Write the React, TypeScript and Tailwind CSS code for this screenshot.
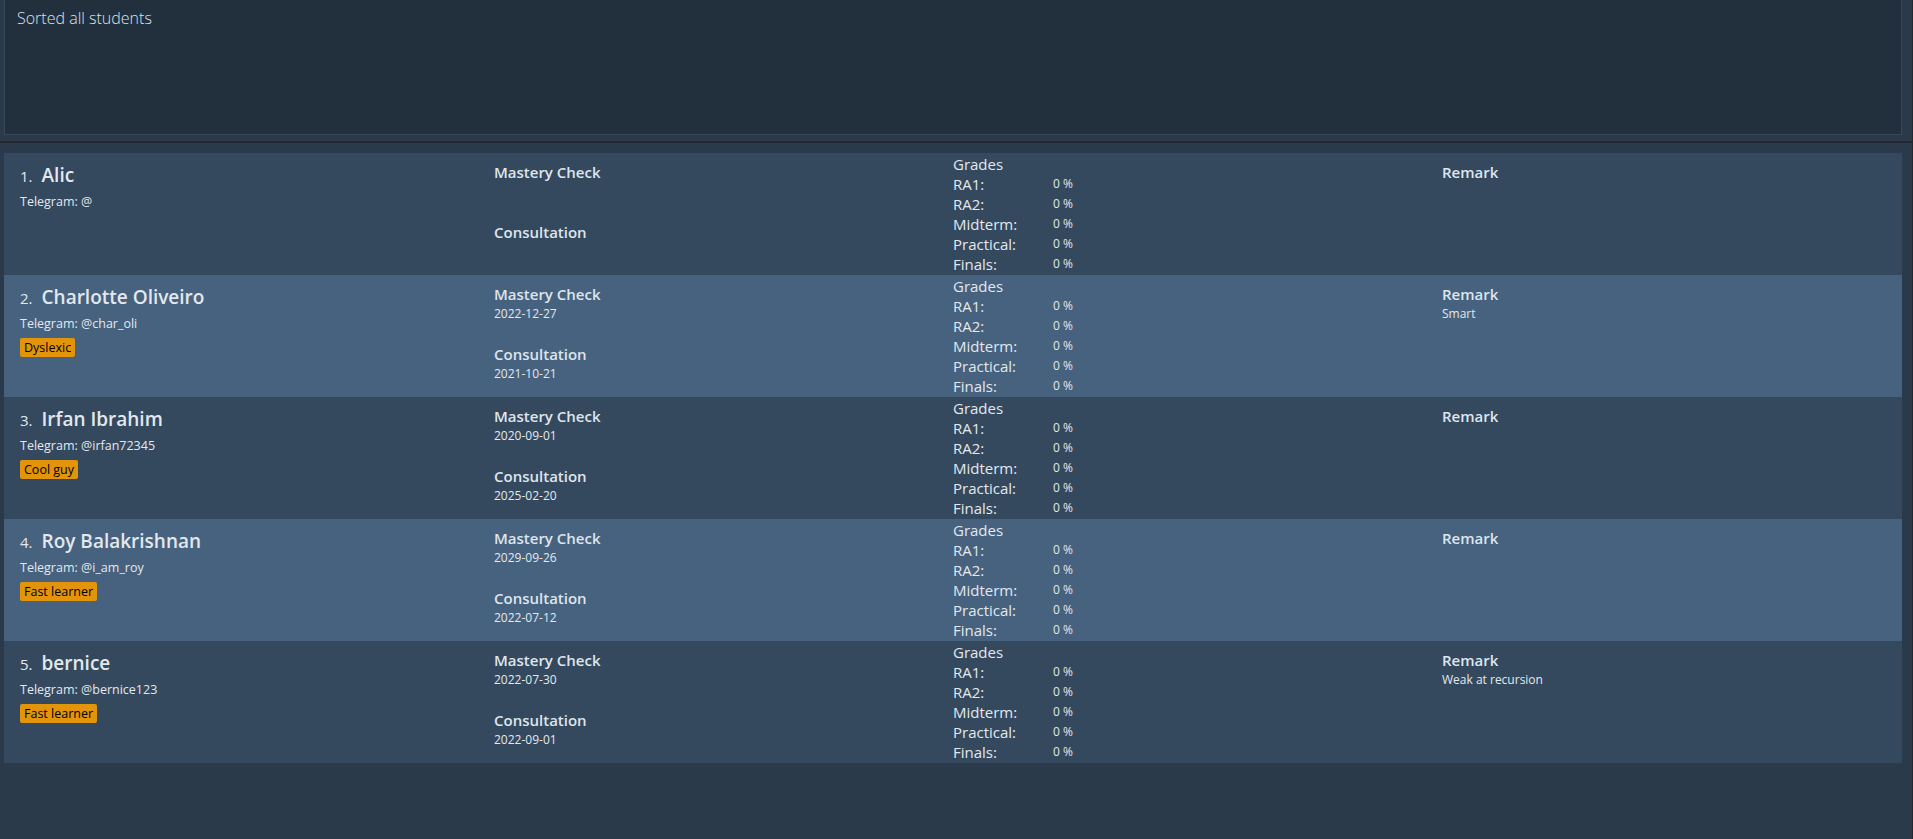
// Student list view — result box on top, one row per student below.
const font = { fontFamily: '"Open Sans", "Noto Sans", sans-serif' };

interface Student {
  name: string;
  telegram: string;
  tag?: string;
  mastery?: string;
  consultation?: string;
  remark?: string;
}

const students: Student[] = [
  { name: 'Alic', telegram: '@' },
  {
    name: 'Charlotte Oliveiro',
    telegram: '@char_oli',
    tag: 'Dyslexic',
    mastery: '2022-12-27',
    consultation: '2021-10-21',
    remark: 'Smart',
  },
  {
    name: 'Irfan Ibrahim',
    telegram: '@irfan72345',
    tag: 'Cool guy',
    mastery: '2020-09-01',
    consultation: '2025-02-20',
  },
  {
    name: 'Roy Balakrishnan',
    telegram: '@i_am_roy',
    tag: 'Fast learner',
    mastery: '2029-09-26',
    consultation: '2022-07-12',
  },
  {
    name: 'bernice',
    telegram: '@bernice123',
    tag: 'Fast learner',
    mastery: '2022-07-30',
    consultation: '2022-09-01',
    remark: 'Weak at recursion',
  },
];

const gradeRows = ['RA1:', 'RA2:', 'Midterm:', 'Practical:', 'Finals:'];

function StudentRow({ s, index }: { s: Student; index: number }) {
  const bg = index % 2 === 0 ? 'bg-[#34495e]' : 'bg-[#46627f]';
  return (
    <div className={`${bg} h-[122px] grid grid-cols-[490px_459px_489px_1fr] text-[#e3e8ee]`}>
      {/* Name, handle, tag */}
      <div className="pl-4 pt-[8px]">
        <div className="flex items-baseline gap-[9px] h-[26px]">
          <span className="text-[15px]">{index + 1}.</span>
          <span className="text-[19px] font-semibold">{s.name}</span>
        </div>
        <div className="mt-[7px] text-[12.5px] leading-[16px]">Telegram: {s.telegram}</div>
        {s.tag && (
          <span className="mt-[6px] inline-block h-[19px] rounded-[2px] bg-[#e2950b] px-[4px] text-[12.5px] leading-[19px] text-black">
            {s.tag}
          </span>
        )}
      </div>

      {/* Mastery check / consultation dates */}
      <div className="pt-[9px]">
        <div className="h-[60px]">
          <div className="text-[15px] font-semibold leading-[20px] text-[#dfe5ec]">Mastery Check</div>
          <div className="mt-[2px] text-[12px] leading-[16px]">{s.mastery}</div>
        </div>
        <div className="h-[60px]">
          <div className="text-[15px] font-semibold leading-[20px] text-[#dfe5ec]">Consultation</div>
          <div className="mt-[2px] text-[12px] leading-[16px]">{s.consultation}</div>
        </div>
      </div>

      {/* Grades */}
      <div className="pt-[1px]">
        <div className="text-[15px] leading-[20px]">Grades</div>
        {gradeRows.map((g) => (
          <div key={g} className="flex items-center h-[20px]">
            <span className="w-[100px] text-[15px]">{g}</span>
            <span className="text-[12px]">0 %</span>
          </div>
        ))}
      </div>

      {/* Remark */}
      <div className="pt-[9px]">
        <div className="text-[15px] font-semibold leading-[20px] text-[#dfe5ec]">Remark</div>
        <div className="mt-[2px] text-[12px] leading-[16px]">{s.remark}</div>
      </div>
    </div>
  );
}

export default function App() {
  return (
    <div style={font} className="h-[839px] overflow-hidden bg-[#2b3a4b] border-r border-[#22282e]">
      {/* Result display */}
      <div className="pl-1 pr-[10px]">
        <div className="h-[135px] border-x border-b border-[#374859] bg-[#222f3d] px-[12px] pt-[7px]">
          <p className="text-[16px] font-light leading-[22px] text-[#dbe3ec]">Sorted all students</p>
        </div>
      </div>

      <div className="mt-[6px] h-[2px] bg-[#22282e]" />

      {/* Student list */}
      <div className="pl-1 pr-[10px] pt-[10px]">
        {students.map((s, i) => (
          <StudentRow key={s.name} s={s} index={i} />
        ))}
      </div>
    </div>
  );
}
